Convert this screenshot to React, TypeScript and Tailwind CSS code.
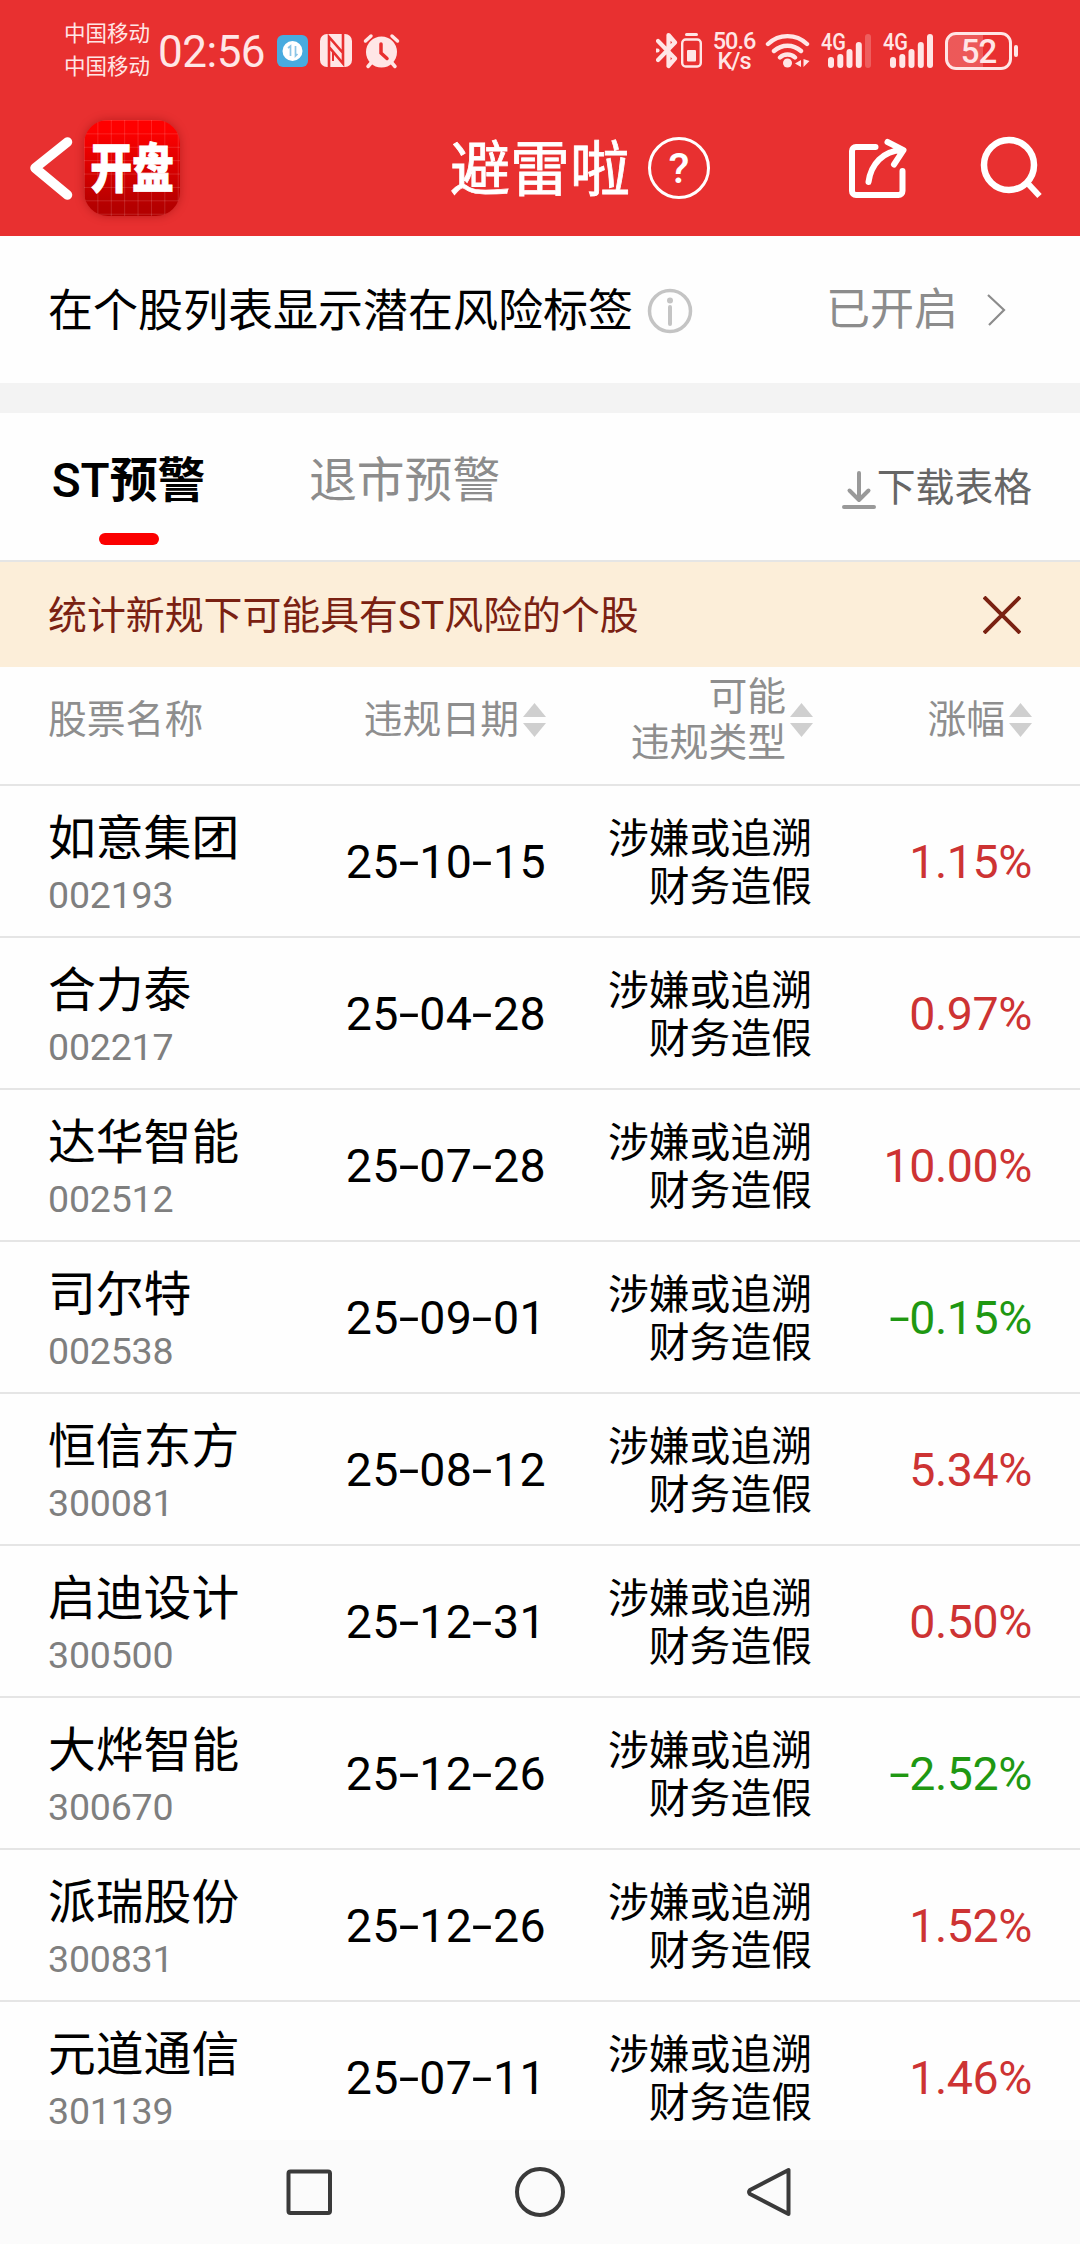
import clsx from "clsx";

type Stock = {
    name: string;
    code: string;
    date: string;
    change: string;
};

const stocks: Stock[] = [
    { name: "如意集团", code: "002193", date: "25-10-15", change: "1.15%" },
    { name: "合力泰", code: "002217", date: "25-04-28", change: "0.97%" },
    { name: "达华智能", code: "002512", date: "25-07-28", change: "10.00%" },
    { name: "司尔特", code: "002538", date: "25-09-01", change: "-0.15%" },
    { name: "恒信东方", code: "300081", date: "25-08-12", change: "5.34%" },
    { name: "启迪设计", code: "300500", date: "25-12-31", change: "0.50%" },
    { name: "大烨智能", code: "300670", date: "25-12-26", change: "-2.52%" },
    { name: "派瑞股份", code: "300831", date: "25-12-26", change: "1.52%" },
    { name: "元道通信", code: "301139", date: "25-07-11", change: "1.46%" },
];

// hyphens sit higher and wider than the font's own
const Figures = ({ value }: { value: string }) => (
    <>
        {value.split("").map((ch, index) =>
            ch === "-" ? (
                <span key={index} className="inline-block w-[20.5px] origin-center -translate-y-px scale-x-[1.6] text-center">-</span>
            ) : (
                <span key={index}>{ch}</span>
            )
        )}
    </>
);

const SortIcon = () => (
    <svg className="ml-[4px] h-[34px] w-[23px] shrink-0" viewBox="0 0 23 34" fill="#cfcfcf">
        <path d="M11.5 0 23 14H0z" />
        <path d="M11.5 34 23 20H0z" />
    </svg>
);

const Signal = ({ weak }: { weak?: boolean }) => (
    <div className="relative h-[38px] w-[52px]">
        <svg className="h-[38px] w-[52px]" viewBox="0 0 52 38" fill="#ffe6e6">
            <rect x="7" y="25" width="6" height="11" rx="3" />
            <rect x="16.3" y="22" width="6" height="14" rx="3" />
            <rect x="25.5" y="17" width="6" height="19" rx="3" />
            <rect x="34.8" y="10" width="6" height="26" rx="3" />
            <rect x="44" y="2" width="6" height="34" rx="3" opacity={weak ? 0.25 : 1} />
        </svg>
        <span className="absolute left-0 -top-[3px] origin-left scale-x-[0.87] text-[23px] font-medium leading-[28px]">4G</span>
    </div>
);

const StatusBar = () => (
    <div className="flex h-[100px] items-start pl-[64px] text-[#ffe6e6]">
        <div className="mt-[17px] text-[21.5px] leading-[33px]">
            <p>中国移动</p>
            <p>中国移动</p>
        </div>
        <span className="ml-[8px] mt-[27px] w-[108px] whitespace-nowrap text-[44px] leading-[50px] tracking-[-0.5px]">02:56</span>
        <svg className="ml-[11px] mt-[35px] h-[32px] w-[31px]" viewBox="0 0 31 32">
            <rect width="31" height="32" rx="6" fill="#48abdf" />
            <circle cx="15.5" cy="16" r="10" fill="#fff" />
            <path d="M11 13l2.500-2v10M18.500 11v10l2-2" fill="none" stroke="#8cc5e6" strokeWidth="1.7" />
        </svg>
        <svg className="ml-[12px] mt-[34px] h-[33px] w-[32px]" viewBox="0 0 32 33">
            <rect width="32" height="33" rx="7" fill="#ffe6e6" />
            <path d="M9 33V3l14 16M23 0v29.500L9.500 13.500" fill="none" stroke="#e83030" strokeWidth="2.6" />
            <path d="M13 18v9" fill="none" stroke="#e83030" strokeWidth="2" />
        </svg>
        <svg className="ml-[11px] mt-[33px] h-[36px] w-[37px]" viewBox="0 0 37 36" fill="none" stroke="#ffe6e6" strokeLinecap="round">
            <circle cx="18.5" cy="19" r="15.5" fill="#ffe6e6" stroke="none" />
            <path d="M2.500 8 8 3M34.500 8 29 3M8 30l-3 3.500M29 30l3 3.500" strokeWidth="3.5" />
            <path d="M18 11v9l6 5.500" stroke="#e83030" strokeWidth="3.5" />
        </svg>
        <div className="ml-auto mr-[62px] flex items-start pt-[32px]">
            <svg className="h-[37px] w-[22px]" viewBox="0 0 22 37" fill="none" stroke="#ffe6e6" strokeWidth="4.2" strokeLinecap="round" strokeLinejoin="round">
                <path d="M2 9l17 17.500-6.500 7.500V3l6.500 7.500L2 28" />
                <path d="M1 18.500h.5" />
            </svg>
            <svg className="ml-[3px] h-[37px] w-[21px]" viewBox="0 0 21 37" fill="none" stroke="#ffe6e6">
                <rect x="1.2" y="7.5" width="18.6" height="27" rx="3.5" strokeWidth="2.4" />
                <path d="M5.500 2.500h10" strokeWidth="3" strokeLinecap="round" />
                <rect x="6" y="18" width="9" height="11.5" rx="1" fill="#ffe6e6" stroke="none" />
            </svg>
            <div className="ml-[10px] -mt-[1px] w-[44px] text-center text-[23.500px] font-medium leading-[20px] tracking-[-1px]">
                <p>50.6</p>
                <p>K/s</p>
            </div>
            <svg className="ml-[9px] h-[37px] w-[45px]" viewBox="0 0 45 37" fill="none" stroke="#ffe6e6" strokeWidth="4.4" strokeLinecap="round">
                <path d="M3 12C14 1.500 31 1.500 42 12M9 19c8-7 19-7 27 0M15 25.500c4-4 11-4 15 0" />
                <circle cx="22.5" cy="31" r="4.5" fill="#ffe6e6" stroke="none" />
                <path d="M36 28v7l-6-3.500zM38.500 27v8l6-6z" fill="#ffe6e6" stroke="none" />
            </svg>
            <div className="ml-[11px]"><Signal weak /></div>
            <div className="ml-[10px]"><Signal /></div>
            <div className="ml-[10px] flex items-center">
                <div className="h-[38px] w-[67px] rounded-[11px] border-[3px] border-[#ffe6e6] bg-linear-to-r from-white/20 from-58% to-transparent to-58% text-center text-[33px] font-medium leading-[33px] tracking-[-1px]">52</div>
                <div className="ml-[2px] h-[12px] w-[4px] rounded-sm bg-[#ffe6e6]" />
            </div>
        </div>
    </div>
);

const NavBar = () => (
    <div className="flex h-[136px] items-center">
        <svg className="ml-[29px] h-[66px] w-[46px]" viewBox="0 0 46 66" fill="none" stroke="#fff" strokeWidth="9.5" strokeLinecap="round" strokeLinejoin="round">
            <path d="M38.500 7 6 33l32.500 27" />
        </svg>
        <div className="ml-[9px] flex h-[96px] w-[96px] items-center justify-center overflow-hidden rounded-[24px] bg-[linear-gradient(rgba(255,255,255,0.14)_1px,transparent_1px),linear-gradient(90deg,rgba(255,255,255,0.14)_1px,transparent_1px),linear-gradient(#ff0000_10%,#b40000_90%)] bg-[size:13.400px_13.400px,13.400px_13.400px,100%_100%] shadow-[0_0_10px_rgba(120,0,0,0.4)]">
            <span className="mt-[3px] scale-x-[0.79] whitespace-nowrap text-[53px] font-black leading-[60px] text-white [-webkit-text-stroke:0.800px_#fff]">开盘</span>
        </div>
        <h1 className="ml-[270px] mt-[5px] text-[60px] font-normal leading-[64px] text-white [-webkit-text-stroke:0.800px_#fff]">避雷啦</h1>
        <div className="ml-[18px] flex h-[62px] w-[62px] items-center justify-center rounded-full border-[3px] border-white text-[43px] font-medium leading-[50px] text-white">?</div>
        <svg className="ml-[138px] h-[62px] w-[60px]" viewBox="0 0 60 62" fill="none" stroke="#fff" strokeWidth="6" strokeLinecap="round" strokeLinejoin="round">
            <path d="M27.500 10H8a4 4 0 0 0-4 4v40a4 4 0 0 0 4 4h42.500a4 4 0 0 0 4-4V34" />
            <path d="M20.500 45C23 27 35 14 54 13M39.500 5 55.500 13.200 46 27.500" />
        </svg>
        <svg className="ml-[70px] h-[66px] w-[66px]" viewBox="0 0 66 66" fill="none" stroke="#fff">
            <circle cx="31" cy="30" r="25" strokeWidth="6.5" />
            <path d="M48.500 47l13 14" strokeWidth="6" />
        </svg>
    </div>
);

const TableHead = () => (
    <div className="flex h-[119px] items-start whitespace-nowrap border-b-2 border-[#e5e5e5] pl-[48px] text-[38.800px] leading-[46px] text-[#8e8e8e]">
        <div className="mt-[30px] w-[260px]">股票名称</div>
        <div className="mt-[30px] flex w-[238px] items-center justify-end">
            违规日期<SortIcon />
        </div>
        <div className="mt-[7px] flex w-[267px] items-center justify-end">
            <p className="text-right">可能<br />违规类型</p><SortIcon />
        </div>
        <div className="mt-[30px] flex w-[219px] items-center justify-end">
            涨幅<SortIcon />
        </div>
    </div>
);

const StockRow = ({ stock, last }: { stock: Stock; last: boolean }) => (
    <div className={clsx("flex items-start pl-[48px]", last ? "h-[138px]" : "h-[152px] border-b-2 border-[#e5e5e5]")}>
        <div className="w-[260px] pt-[24px]">
            <p className="text-[47.800px] leading-[58px] text-black">{stock.name}</p>
            <p className="mt-[4px] text-[37.500px] leading-[46px] tracking-[-0.200px] text-[#7f7f7f]">{stock.code}</p>
        </div>
        <div className="w-[238px] whitespace-nowrap pt-[48px] text-right text-[46.500px] leading-[56px] tracking-[0.400px] text-black">
            <Figures value={stock.date} />
        </div>
        <p className="w-[266px] pt-[29px] text-right text-[40.800px] leading-[48px] text-black">涉嫌或追溯<br />财务造假</p>
        <div className={clsx("w-[220px] whitespace-nowrap pt-[48px] text-right text-[46.500px] leading-[56px] tracking-[-0.400px]", stock.change.startsWith("-") ? "text-[#1f9812]" : "text-[#cd3333]")}>
            <Figures value={stock.change} />
        </div>
    </div>
);

const App = () => {
    return (
        <div className="flex h-[2244px] w-[1080px] flex-col overflow-hidden bg-[#fefefe] font-['Roboto','Noto_Sans_CJK_SC',sans-serif]">
            <header className="h-[236px] bg-[#e83030]">
                <StatusBar />
                <NavBar />
            </header>
            <div className="flex h-[147px] items-center pl-[48px] pr-[74px]">
                <span className="mt-[4px] text-[45px] leading-[60px] text-black">在个股列表显示潜在风险标签</span>
                <svg className="ml-[14px] mt-[3px] h-[46px] w-[46px]" viewBox="0 0 46 46" fill="none" stroke="#c4c4c4">
                    <circle cx="23" cy="23" r="20.5" strokeWidth="3.5" />
                    <path d="M23 19v17" strokeWidth="4" strokeLinecap="round" />
                    <circle cx="23" cy="12.5" r="3" fill="#c4c4c4" stroke="none" />
                </svg>
                <span className="ml-auto text-[44px] leading-[60px] text-[#8c8c8c]">已开启</span>
                <svg className="ml-[29px] mt-[1px] h-[32px] w-[19px]" viewBox="0 0 19 32" fill="none" stroke="#8c8c8c" strokeWidth="2.2">
                    <path d="M1 1l16 15L2 31" />
                </svg>
            </div>
            <div className="h-[30px] bg-[#f3f3f3]" />
            <div className="flex h-[149px] items-start border-b-2 border-[#e5e5e5] pl-[52px] pr-[48px]">
                <div className="flex w-[153px] flex-col items-center pt-[38px]">
                    <span className="whitespace-nowrap text-[47.800px] font-bold leading-[60px] text-black"><span className="font-medium">ST</span>预警</span>
                    <div className="mt-[22px] h-[12px] w-[60px] rounded-full bg-[#fb0000]" />
                </div>
                <span className="ml-[104px] pt-[38px] text-[47.800px] leading-[60px] text-[#8c8c8c]">退市预警</span>
                <div className="ml-auto flex items-center pt-[50px] text-[#666]">
                    <svg className="mt-[3px] h-[38px] w-[34px]" viewBox="0 0 34 38" fill="none" stroke="#999" strokeWidth="4" strokeLinecap="round" strokeLinejoin="round">
                        <path d="M17 2v27M7.500 19.500 17 29l9.500-9.500M2 36h30" />
                    </svg>
                    <span className="ml-[1px] text-[38.800px] leading-[50px]">下载表格</span>
                </div>
            </div>
            <div className="flex h-[105px] items-center bg-[#fceed9] pl-[48px] pr-[59px] text-[#7a2112]">
                <span className="mt-[2px] text-[38.900px] leading-[50px]">统计新规下可能具有ST风险的个股</span>
                <svg className="ml-auto h-[38px] w-[38px]" viewBox="0 0 38 38" fill="none" stroke="#7a2112" strokeWidth="4">
                    <path d="M1 1l36 36M37 1 1 37" />
                </svg>
            </div>
            <TableHead />
            <div className="flex-1">
                {stocks.map((stock, index) => (
                    <StockRow key={stock.code} stock={stock} last={index === stocks.length - 1} />
                ))}
            </div>
            <div className="flex h-[104px] items-center bg-[#fbfbfb]">
                <svg className="ml-[283px] h-[52px] w-[52px]" viewBox="0 0 52 52" fill="none" stroke="#3a3a3a" strokeWidth="4">
                    <rect x="5.5" y="5.5" width="41.5" height="41.5" rx="2" />
                </svg>
                <svg className="ml-[179px] h-[52px] w-[52px]" viewBox="0 0 52 52" fill="none" stroke="#3a3a3a" strokeWidth="4">
                    <circle cx="26" cy="26" r="23" />
                </svg>
                <svg className="ml-[180px] h-[52px] w-[52px]" viewBox="0 0 52 52" fill="none" stroke="#3a3a3a" strokeWidth="4" strokeLinejoin="round">
                    <path d="M42.500 4v44L4 28q-2-2 0-4z" />
                </svg>
            </div>
        </div>
    );
};

export default App;
